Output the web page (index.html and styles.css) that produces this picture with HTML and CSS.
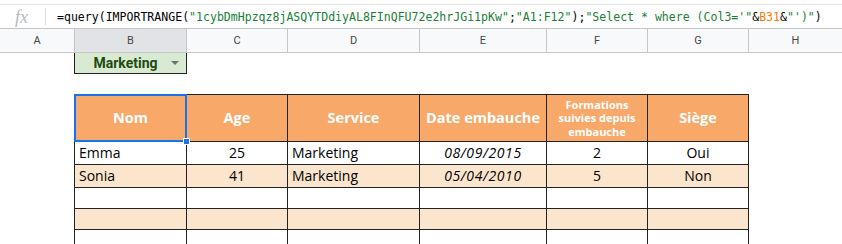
FILE: index.html
```html
<!DOCTYPE html>
<html lang="fr">
<head>
<meta charset="utf-8">
<title>Sheet</title>
<link rel="stylesheet" href="styles.css">
</head>
<body>
<div class="app">
  <div class="formula-bar">
    <span class="fx">fx</span>
    <span class="sep"></span>
    <code class="formula">=query(IMPORTRANGE(<span class="str">"1cybDmHpzqz8jASQYTDdiyAL8FInQFU72e2hrJGi1pKw"</span>;<span class="str">"A1:F12"</span>);<span class="str">"Select * where (Col3='"</span>&amp;<span class="ref">B31</span>&amp;<span class="str">"')"</span>)</code>
  </div>
  <div class="col-headers">
    <div class="ch">A</div>
    <div class="ch sel">B</div>
    <div class="ch">C</div>
    <div class="ch">D</div>
    <div class="ch">E</div>
    <div class="ch">F</div>
    <div class="ch">G</div>
    <div class="ch last">H</div>
  </div>
  <table class="sheet">
    <colgroup>
      <col class="c-a"><col class="c-b"><col class="c-c"><col class="c-d"><col class="c-e"><col class="c-f"><col class="c-g"><col class="c-h">
    </colgroup>
    <tr class="r-chip">
      <td></td>
      <td class="chip-cell"><span class="chip">Marketing</span><span class="arrow"></span></td>
      <td></td><td></td><td></td><td></td><td></td><td></td>
    </tr>
    <tr class="r-gap"><td></td><td></td><td></td><td></td><td></td><td></td><td></td><td></td></tr>
    <tr class="r-head">
      <td></td>
      <th class="first selected">Nom<span class="handle"></span></th>
      <th>Age</th>
      <th>Service</th>
      <th>Date embauche</th>
      <th class="small">Formations suivies depuis embauche</th>
      <th>Siège</th>
      <td></td>
    </tr>
    <tr class="r-data">
      <td></td>
      <td class="b first">Emma</td>
      <td class="b ctr">25</td>
      <td class="b">Marketing</td>
      <td class="b ctr it">08/09/2015</td>
      <td class="b ctr">2</td>
      <td class="b ctr">Oui</td>
      <td></td>
    </tr>
    <tr class="r-data alt">
      <td></td>
      <td class="b first">Sonia</td>
      <td class="b ctr">41</td>
      <td class="b">Marketing</td>
      <td class="b ctr it">05/04/2010</td>
      <td class="b ctr">5</td>
      <td class="b ctr">Non</td>
      <td></td>
    </tr>
    <tr class="r-data sm">
      <td></td><td class="b first"></td><td class="b"></td><td class="b"></td><td class="b"></td><td class="b"></td><td class="b"></td><td></td>
    </tr>
    <tr class="r-data sm alt">
      <td></td><td class="b first"></td><td class="b"></td><td class="b"></td><td class="b"></td><td class="b"></td><td class="b"></td><td></td>
    </tr>
    <tr class="r-data sm">
      <td></td><td class="b first"></td><td class="b"></td><td class="b"></td><td class="b"></td><td class="b"></td><td class="b"></td><td></td>
    </tr>
  </table>
</div>
</body>
</html>
```

FILE: styles.css
```css
* { box-sizing: border-box; }
html, body { margin: 0; padding: 0; background: #fff; }
body { font-family: "Open Sans", "Liberation Sans", sans-serif; color: #000; }
.app { width: 842px; height: 244px; overflow: hidden; }

.formula-bar {
  margin-top: 4px;
  height: 24px;
  border-top: 1px solid #e2e3e5;
  display: flex;
  align-items: center;
}
.fx {
  font-family: "Liberation Serif", "DejaVu Serif", serif;
  font-style: italic;
  font-size: 18px;
  color: #b6b9bd;
  width: 45px;
  padding-left: 15px;
  line-height: 1;
}
.sep { width: 1px; height: 17px; background: #dadce0; }
.formula {
  font-family: "DejaVu Sans Mono", "Liberation Mono", monospace;
  font-size: 11.55px;
  color: #000;
  padding-left: 11px;
  white-space: pre;
}
.formula .str { color: #188038; }
.formula .ref { color: #f57c00; }

.col-headers {
  display: grid;
  grid-template-columns: 75px 112px 101px 132px 127px 101px 101px 93px;
  height: 25px;
  border-top: 1px solid #c4c7c5;
  border-bottom: 1px solid #c4c7c5;
  background: #f8f9fa;
}
.ch {
  border-right: 1px solid #c4c7c5;
  display: flex;
  align-items: center;
  justify-content: center;
  font-family: "Roboto", "Liberation Sans", sans-serif;
  font-size: 11px;
  color: #444746;
}
.ch.sel { background: #e1e3e6; }
.ch.last { border-right: none; }

.sheet {
  border-collapse: separate;
  border-spacing: 0;
  table-layout: fixed;
  width: 842px;
  font-size: 14px;
  line-height: 16px;
}
.c-a { width: 74px; }
.c-b { width: 113px; }
.c-c { width: 101px; }
.c-d { width: 132px; }
.c-e { width: 127px; }
.c-f { width: 101px; }
.c-g { width: 101px; }
.c-h { width: 93px; }
.sheet td, .sheet th { padding: 0 4px; }

.r-chip { height: 21px; }
.chip-cell {
  border-left: 1px solid #222;
  border-right: 1px solid #222;
  border-bottom: 1px solid #222;
  background: #d9ead3;
  position: relative;
  text-align: center;
}
.chip {
  font-family: "Roboto", "Liberation Sans", sans-serif;
  font-weight: 700;
  font-size: 14px;
  color: #1f4a10;
  margin-right: 10px;
}
.arrow {
  position: absolute;
  right: 7px;
  top: 8px;
  width: 0; height: 0;
  border-left: 4px solid transparent;
  border-right: 4px solid transparent;
  border-top: 4px solid #6b7570;
}
.r-gap { height: 20px; }

.r-head { height: 48px; }
.r-head th {
  background: #f8a868;
  color: #fff;
  font-weight: 700;
  font-size: 14.5px;
  text-align: center;
  vertical-align: middle;
  border-top: 1px solid #222;
  border-right: 1px solid #222;
  border-bottom: 1px solid #222;
  padding: 0 2px;
}
.r-head th.first { border-left: 1px solid #222; }
.r-head th.small { font-size: 11px; line-height: 13.5px; padding: 0 4px; }
.selected { position: relative; }
.selected::after {
  content: "";
  position: absolute;
  left: -1px; top: -1px; right: -1px; bottom: -1px;
  border: 2px solid #1a73e8;
}
.handle {
  position: absolute;
  right: -4px;
  bottom: -4px;
  width: 7px;
  height: 7px;
  background: #1a73e8;
  border: 1px solid #fff;
  z-index: 2;
}

.r-data { height: 23px; }
.r-data.sm { height: 21px; }
.r-data td.b {
  border-right: 1px solid #222;
  border-bottom: 1px solid #222;
  vertical-align: middle;
  white-space: nowrap;
  padding: 0 4px;
}
.r-data td.first { border-left: 1px solid #222; }
.r-data.alt td.b { background: #fce5cd; }
.ctr { text-align: center; }
.it { font-style: italic; letter-spacing: 0.6px; }
```
